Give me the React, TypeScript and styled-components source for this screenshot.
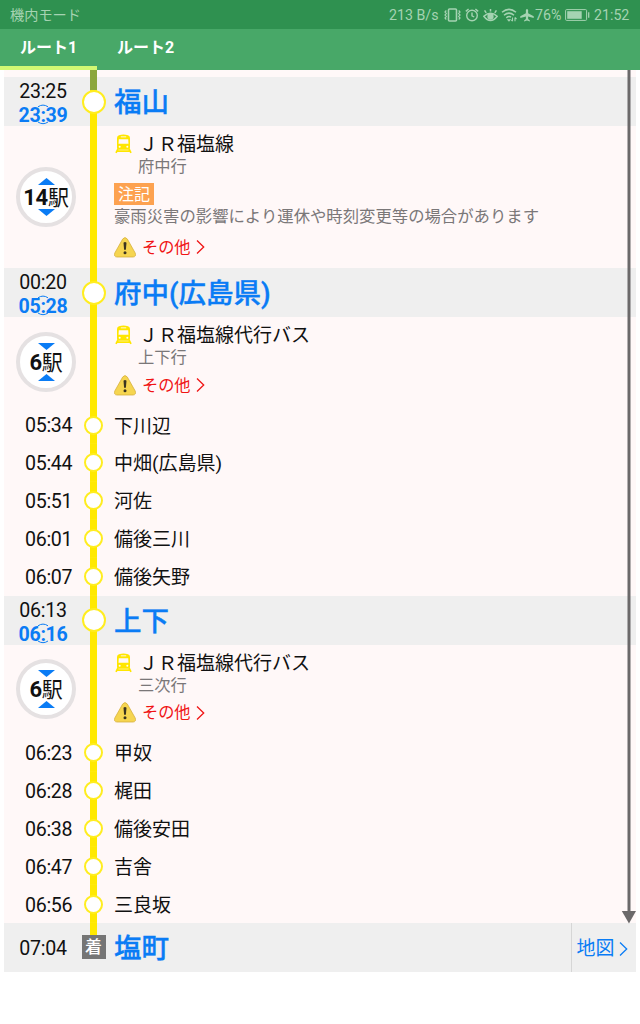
import React from "react";
import styled, { createGlobalStyle } from "styled-components";

const GlobalStyle = createGlobalStyle`
  *, *::before, *::after { box-sizing: border-box; }
  body {
    margin: 0;
    background: #fff;
    font-family: Roboto, "Noto Sans CJK JP", sans-serif;
    color: #111;
  }
`;

const BLUE = "#0a7cf5";
const YELLOW = "#ffe900";

const Screen = styled.div`
  width: 640px;
  height: 1024px;
  overflow: hidden;
  background: #fff;
`;

const StatusBar = styled.header`
  display: flex;
  align-items: center;
  justify-content: space-between;
  height: 29px;
  padding: 1px 9px 0 10px;
  background: #2f9150;
  color: #a5d3b2;
  font-size: 14.2px;
  line-height: 20px;
`;

const StatusItems = styled.div`
  display: flex;
  align-items: center;
  height: 20px;
`;

const StatusText = styled.span<{ $width: number; $gap?: number }>`
  width: ${(p) => p.$width}px;
  margin-left: ${(p) => p.$gap ?? 0}px;
  white-space: nowrap;
`;

const StatusIcon = styled.svg<{ $gap: number }>`
  display: block;
  flex: none;
  margin-left: ${(p) => p.$gap}px;
  fill: none;
  stroke: #a5d3b2;
`;

const Tabs = styled.nav`
  display: flex;
  height: 41px;
  background: #48a868;
`;

const Tab = styled.div<{ $active?: boolean }>`
  width: 97px;
  height: 41px;
  border-bottom: 4px solid ${(p) => (p.$active ? "#d1f873" : "transparent")};
  padding-top: 7px;
  text-align: center;
  color: #fff;
  font-size: 16px;
  font-weight: 700;
  line-height: 24px;
`;

const Timetable = styled.main`
  position: relative;
  margin: 0 4px;
  padding-top: 7px;
  background: #fff8f8;
`;

const columns = `
  display: grid;
  grid-template-columns: 78px 23px 9px 1fr;
  grid-template-rows: 100%;
`;

const StationRow = styled.section`
  ${columns}
  height: 49px;
  background: #efefef;
`;

const Times = styled.div`
  display: flex;
  flex-direction: column;
  align-items: center;
  padding-top: 3px;
  font-size: 19.6px;
  letter-spacing: -0.3px;
  line-height: 24px;
`;

const GoalTime = styled(Times)`
  padding-top: 14px;
`;

const Departure = styled.span`
  position: relative;
  color: ${BLUE};
  font-weight: 700;
`;

const Picker = styled.svg`
  position: absolute;
  left: 50%;
  top: 0;
  margin-left: -6px;
  fill: none;
  stroke: ${BLUE};
`;

const Track = styled.div`
  display: flex;
  align-items: center;
  justify-content: center;
  background: linear-gradient(${YELLOW}, ${YELLOW}) center / 7px 100% no-repeat;
`;

const Node = styled.span<{ $size: number }>`
  flex: none;
  width: ${(p) => p.$size}px;
  height: ${(p) => p.$size}px;
  margin: 0 -2px;
  border: 2px solid #ffed20;
  border-radius: 50%;
  background: #fff;
`;

const Arrival = styled.span`
  flex: none;
  width: 24px;
  height: 24px;
  background: #757575;
  color: #fff;
  font-size: 17px;
  font-weight: 500;
  line-height: 24px;
  text-align: center;
`;

const StationName = styled.h2`
  grid-column: 4;
  margin: 0;
  padding-top: 2px;
  color: ${BLUE};
  font-size: 27.5px;
  font-weight: 500;
  -webkit-text-stroke: 0.35px ${BLUE};
  line-height: 48px;
  white-space: nowrap;
`;

const LegRow = styled.section<{ $height: number }>`
  ${columns}
  height: ${(p) => p.$height}px;
`;

const CountCell = styled.div`
  display: flex;
  align-items: center;
  padding-left: 12px;
`;

const CountButton = styled.div`
  display: flex;
  flex-direction: column;
  align-items: center;
  justify-content: center;
  width: 60px;
  height: 60px;
  border: 4.5px solid #e5e1e2;
  border-radius: 50%;
  background: #fff;
`;

const CountText = styled.span`
  position: relative;
  height: 24px;
  font-size: 21px;
  line-height: 25px;
  letter-spacing: -0.2px;
  white-space: nowrap;
`;

const CountDigits = styled.b`
  font-size: 22px;
  font-weight: 700;
`;

const Triangle = styled.svg`
  display: block;
  fill: ${BLUE};
`;

const LegInfo = styled.div`
  grid-column: 4;
  padding-top: 8px;
`;

const LineName = styled.div`
  display: flex;
  align-items: center;
  gap: 6px;
  height: 20px;
  font-size: 19px;
  line-height: 20px;
`;

const LineText = styled.span`
  padding-top: 2px;
  margin-left: 1px;
  white-space: nowrap;
`;

const Destination = styled.div`
  padding: 1px 0 0 24px;
  color: #7a7778;
  font-size: 16.3px;
  line-height: 23px;
`;

const NoteTag = styled.div`
  width: 40px;
  height: 22px;
  margin-top: 5px;
  background: #fda250;
  color: #fff;
  font-size: 16px;
  line-height: 23px;
  text-align: center;
`;

const NoteText = styled.div`
  color: #7a7778;
  font-size: 16.38px;
  line-height: 23px;
  white-space: nowrap;
`;

const Other = styled.div<{ $gap: number }>`
  display: flex;
  align-items: center;
  height: 24px;
  margin-top: ${(p) => p.$gap}px;
  color: #f01414;
  font-size: 16.2px;
  line-height: 24px;
`;

const OtherText = styled.span`
  margin: 0 5px 0 6px;
  padding-top: 1px;
`;

const StopRow = styled.div`
  ${columns}
  height: 37.9px;
  font-size: 19px;
  line-height: 40px;
`;

const StopTime = styled.span`
  padding: 0.4px 0 0 21px;
  font-size: 19.6px;
  letter-spacing: -0.3px;
`;

const StopName = styled.span`
  grid-column: 4;
  padding-top: 0.5px;
`;

const GoalRow = styled(StationRow)`
  grid-template-columns: 78px 23px 9px 1fr 65px;
`;

const MapLink = styled.div`
  display: flex;
  align-items: center;
  gap: 4px;
  padding: 2px 0 0 4.5px;
  border-left: 1.5px solid #d6d6d6;
  color: ${BLUE};
  font-size: 19px;
  line-height: 47px;
  white-space: nowrap;
`;

const LeadIn = styled.span`
  position: absolute;
  left: 86px;
  top: 0;
  width: 7px;
  height: 20px;
  background: #8ba63d;
`;

const LineStub = styled.span`
  width: 7px;
  height: 12px;
  background: ${YELLOW};
`;

const GoalTrack = styled.div`
  display: flex;
  flex-direction: column;
  align-items: center;
`;

const Progress = styled.svg`
  position: absolute;
  right: 0;
  top: 0;
`;

const TrainIcon = () => (
  <svg width="18" height="20" viewBox="0 0 18 20">
    <path d="M5 1.200Q9.500-.2 14 1.200Q16 1.800 16 4V14Q16 15.800 14.400 15.800H4.600Q3 15.800 3 14V4Q3 1.800 5 1.200Z" fill="#ffe600" />
    <path d="M6.800 2.400H12.200V3.300H6.800Z" fill="#fff8f8" />
    <path d="M4.800 5.300H14.200L14.500 9.800H4.500Z" fill="#fff8f8" />
    <circle cx="5.700" cy="12.800" r="1" fill="#fff8f8" />
    <circle cx="13.300" cy="12.800" r="1" fill="#fff8f8" />
    <path d="M4 15L2 18.800M15 15L17 18.800M3.200 17.200H15.800" fill="none" stroke="#ffe600" strokeWidth="1.700" />
  </svg>
);

const WarningIcon = () => (
  <svg width="22" height="21" viewBox="0 0 22 21">
    <path d="M8.700 2Q11-.8 13.300 2L21.200 16Q22.500 19.800 19 20H3Q-.5 19.800.8 16Z" fill="#f6d550" stroke="#d7b13e" strokeWidth=".8" />
    <path d="M9.500 5.800Q11 4.400 12.500 5.800L11.900 12.800H10.100Z" fill="#3b3420" />
    <circle cx="11" cy="15.700" r="1.500" fill="#3b3420" />
  </svg>
);

const Chevron = ({ color }: { color: string }) => (
  <svg width="9" height="16" viewBox="0 0 9 16" fill="none" stroke={color} strokeWidth="1.300">
    <path d="M1 1.500L7.700 8L1 14.500" />
  </svg>
);

const Station = ({ name, arr, dep }: { name: string; arr: string; dep: string }) => (
  <StationRow>
    <Times>
      <span>{arr}</span>
      <Departure>
        {dep}
        <Picker width="12" height="23" viewBox="0 0 12 23">
          <path d="M1 2.800Q6-.6 11 2.800M1 18Q6 21.400 11 18" />
        </Picker>
      </Departure>
    </Times>
    <Track>
      <Node $size={24} />
    </Track>
    <StationName>{name}</StationName>
  </StationRow>
);

type LegProps = {
  height: number;
  count: number;
  open?: boolean;
  line: string;
  dest: string;
  note?: string;
};

const Leg = ({ height, count, open, line, dest, note }: LegProps) => {
  const up = "M0 7L8.500 0L17 7Z";
  const down = "M0 0H17L8.500 7Z";
  return (
    <LegRow $height={height}>
      <CountCell>
        <CountButton>
          <Triangle width="17" height="7"><path d={open ? down : up} /></Triangle>
          <CountText><CountDigits>{count}</CountDigits>駅</CountText>
          <Triangle width="17" height="7"><path d={open ? up : down} /></Triangle>
        </CountButton>
      </CountCell>
      <Track />
      <LegInfo>
        <LineName><TrainIcon /><LineText>{line}</LineText></LineName>
        <Destination>{dest}</Destination>
        {note && <NoteTag>注記</NoteTag>}
        {note && <NoteText>{note}</NoteText>}
        <Other $gap={note ? 7 : 4}>
          <WarningIcon /><OtherText>その他</OtherText><Chevron color="#f01414" />
        </Other>
      </LegInfo>
    </LegRow>
  );
};

const Stops = ({ items }: { items: [string, string][] }) => (
  <>
    {items.map(([time, name]) => (
      <StopRow key={time}>
        <StopTime>{time}</StopTime>
        <Track><Node $size={19} /></Track>
        <StopName>{name}</StopName>
      </StopRow>
    ))}
  </>
);

export default function App() {
  return (
    <Screen>
      <GlobalStyle />
      <StatusBar>
        <span>機内モード</span>
        <StatusItems>
          <StatusText $width={51}>213 B/s</StatusText>
          <StatusIcon $gap={4} width="17" height="14" viewBox="0 0 17 14" strokeWidth="1.600">
            <rect x="4.500" y="1" width="8" height="12" rx="1" />
            <path d="M2.300 2.500L1 4L2.300 5.500L1 7L2.300 8.500L1 10L2.300 11.500M14.700 2.500L16 4L14.700 5.500L16 7L14.700 8.500L16 10L14.700 11.500" strokeWidth="1.200" />
          </StatusIcon>
          <StatusIcon $gap={4} width="14" height="14" viewBox="0 0 14 14" strokeWidth="1.400">
            <circle cx="7" cy="7.500" r="5.300" />
            <path d="M7 4.500V7.800L9.200 9M.8 3.400L3.600 1M10.400 1L13.200 3.400" />
          </StatusIcon>
          <StatusIcon $gap={4} width="15" height="14" viewBox="0 0 15 14" strokeWidth="1.500">
            <path d="M.8 8.200Q7.500 2.200 14.200 8.200Q7.500 16.800.8 8.200ZM1.600 2.300L3.200 4.800M7.500 1V3.500M13.400 2.300L11.800 4.800" />
            <circle cx="7.500" cy="8.500" r="2.400" fill="#a5d3b2" />
          </StatusIcon>
          <StatusIcon $gap={3} width="17" height="14" viewBox="0 0 17 14" strokeWidth="1.500">
            <path d="M1 4.300Q8-1.600 15 4.300M3 7.200Q8 3 13 7.200M5.300 9.800Q8 7.600 10 9.200" />
            <path d="M7 11.800L8 13L9 11.800ZM11.500 9.500V13.200M10.300 11.800L11.500 13.200M14 13.200V9.500M15.500 11L14 9.500" strokeWidth="1.100" />
          </StatusIcon>
          <StatusIcon $gap={2} width="14" height="14" viewBox="0 0 15 14" strokeWidth="0">
            <path d="M6.300 1.600Q7.500-.6 8.700 1.600V5L14.700 8.400V10.200L8.700 8.500V11.400L10.600 12.800V13.900L7.500 13L4.400 13.900V12.800L6.300 11.400V8.500L.3 10.200V8.400L6.300 5Z" fill="#a5d3b2" />
          </StatusIcon>
          <StatusText $width={27} $gap={1}>76%</StatusText>
          <StatusIcon $gap={3} width="25" height="12" viewBox="0 0 25 12" strokeWidth="1">
            <rect x=".6" y=".6" width="21" height="10.800" rx="1" />
            <rect x="2.200" y="2.200" width="14.500" height="7.600" fill="#a5d3b2" stroke="none" />
            <path d="M23.700 3.200V8.800" strokeWidth="1.300" />
          </StatusIcon>
          <StatusText $width={37} $gap={4}>21:52</StatusText>
        </StatusItems>
      </StatusBar>
      <Tabs>
        <Tab $active>ルート1</Tab>
        <Tab>ルート2</Tab>
      </Tabs>
      <Timetable>
        <LeadIn />
        <Station name="福山" arr="23:25" dep="23:39" />
        <Leg height={142} count={14} line="ＪＲ福塩線" dest="府中行" note="豪雨災害の影響により運休や時刻変更等の場合があります" />
        <Station name="府中(広島県)" arr="00:20" dep="05:28" />
        <Leg height={89.1} count={6} open line="ＪＲ福塩線代行バス" dest="上下行" />
        <Stops items={[["05:34", "下川辺"], ["05:44", "中畑(広島県)"], ["05:51", "河佐"], ["06:01", "備後三川"], ["06:07", "備後矢野"]]} />
        <Station name="上下" arr="06:13" dep="06:16" />
        <Leg height={89.1} count={6} open line="ＪＲ福塩線代行バス" dest="三次行" />
        <Stops items={[["06:23", "甲奴"], ["06:28", "梶田"], ["06:38", "備後安田"], ["06:47", "吉舎"], ["06:56", "三良坂"]]} />
        <GoalRow>
          <GoalTime><span>07:04</span></GoalTime>
          <GoalTrack><LineStub /><Arrival>着</Arrival></GoalTrack>
          <StationName>塩町</StationName>
          <MapLink>地図<Chevron color={BLUE} /></MapLink>
        </GoalRow>
        <Progress width="15" height="854" viewBox="0 0 15 854">
          <path d="M8 0V843" stroke="#6b696a" strokeWidth="3" />
          <path d="M.8 841H15L8 853.500Z" fill="#6b696a" />
        </Progress>
      </Timetable>
    </Screen>
  );
}
